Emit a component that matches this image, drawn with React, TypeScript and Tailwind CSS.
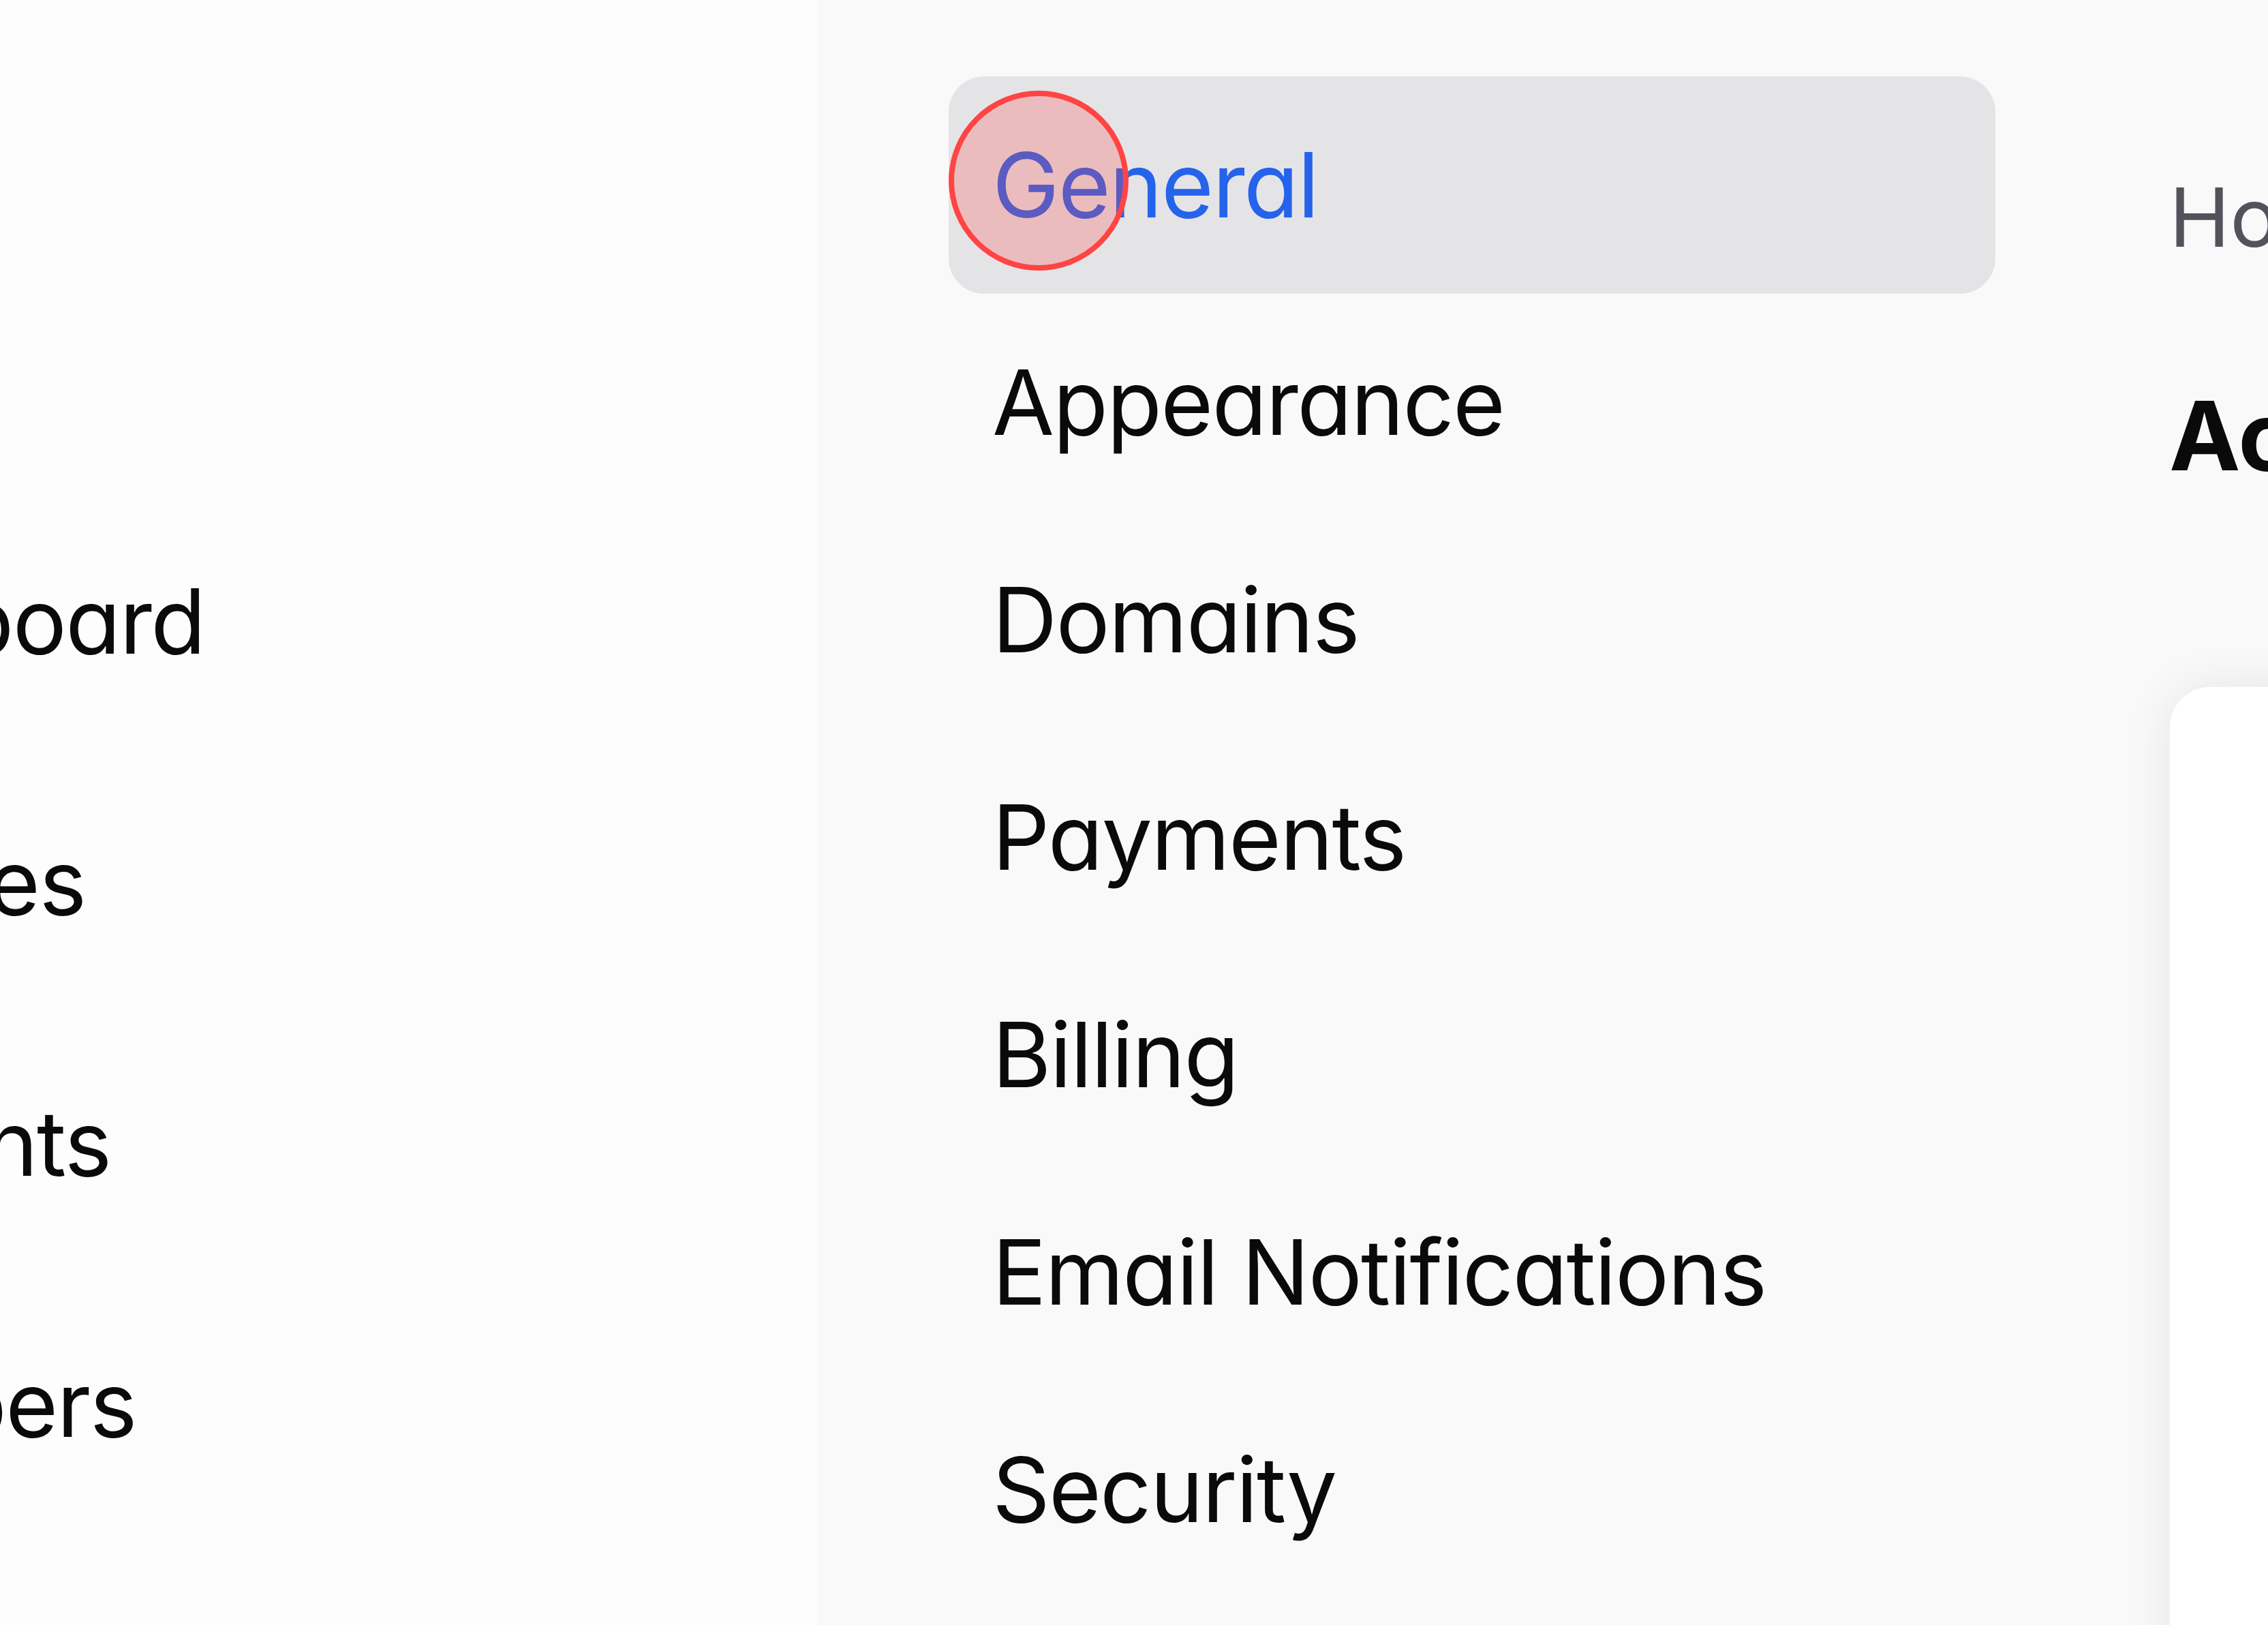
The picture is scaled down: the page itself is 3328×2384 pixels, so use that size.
import React from 'react';

const mainNav = ['Dashboard', 'Invoices', 'Students', 'Members'];
const settingsNav = ['General', 'Appearance', 'Domains', 'Payments', 'Billing', 'Email Notifications', 'Security'];

export default function App() {
    const active = 'General';

    return (
        <div className="flex h-[2384px] w-[3328px] overflow-hidden bg-[#f9f9f9] font-['Inter','Liberation_Sans',sans-serif] [font-feature-settings:'cv11'] text-[#0a0a0b] antialiased">
            {/* Main sidebar */}
            <aside className="w-[1199px] shrink-0 overflow-hidden bg-[#fdfdfd] pt-[720px]">
                <nav className="ml-[-378px] flex flex-col">
                    {mainNav.map(item => (
                        <a key={item} className="block whitespace-nowrap text-[132px] leading-[383px] tracking-[-1.6px]">
                            {item}
                        </a>
                    ))}
                </nav>
            </aside>

            {/* Settings sidebar */}
            <aside className="w-[1922px] shrink-0 px-[193px] pt-[112px]">
                <nav className="flex flex-col">
                    {settingsNav.map(item => (
                        <a
                            key={item}
                            className={
                                item === active
                                    ? 'relative block h-[319px] whitespace-nowrap rounded-[52px] bg-[#e4e4e7] pl-[64px] text-[132px] leading-[319px] tracking-[-1.8px] text-[#2563eb]'
                                    : 'block h-[319px] whitespace-nowrap pl-[64px] text-[132px] leading-[319px] tracking-[-1.8px]'
                            }
                        >
                            {item}
                            {item === active && (
                                <span className="absolute left-[0px] top-[21px] h-[264px] w-[264px] rounded-full border-[8px] border-[#ff4444] bg-[rgba(255,68,68,0.25)]" />
                            )}
                        </a>
                    ))}
                </nav>
            </aside>

            {/* Content */}
            <main className="flex-1 pl-[62px] pt-[259px]">
                <div className="whitespace-nowrap text-[120px] leading-none text-[#52525b]">Home</div>
                <h1 className="mt-[190px] whitespace-nowrap text-[140px] font-bold leading-none">Account Settings</h1>
                <div className="mt-[298px] h-[1600px] w-[1400px] rounded-[60px] border border-black/5 bg-white shadow-[0_0_70px_rgba(0,0,0,0.08)]" />
            </main>
        </div>
    );
}
